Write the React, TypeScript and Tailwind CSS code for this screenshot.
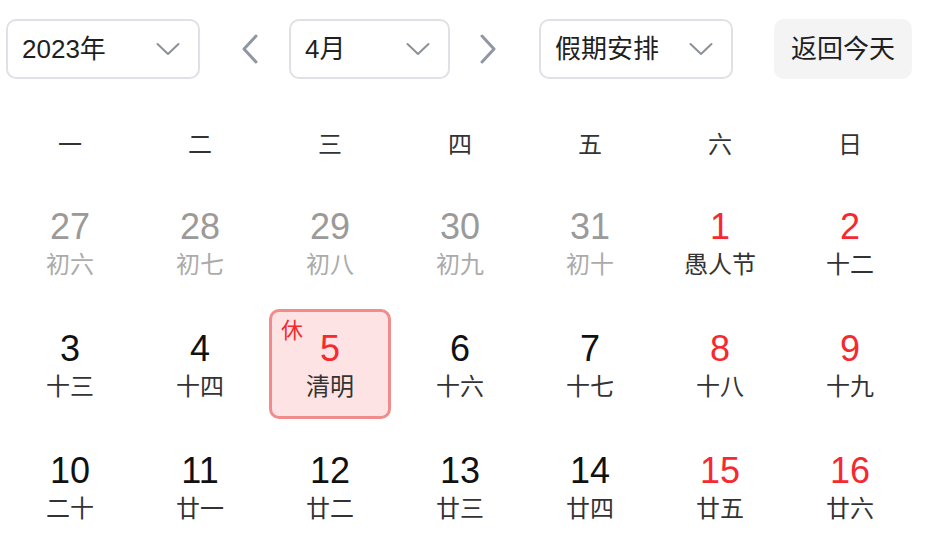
import React from "react";

type Day = {
  num: number;
  lunar: string;
  muted?: boolean;
  red?: boolean;
  rest?: boolean;
};

const WEEKDAYS = ["一", "二", "三", "四", "五", "六", "日"];

const DAYS: Day[] = [
  { num: 27, lunar: "初六", muted: true },
  { num: 28, lunar: "初七", muted: true },
  { num: 29, lunar: "初八", muted: true },
  { num: 30, lunar: "初九", muted: true },
  { num: 31, lunar: "初十", muted: true },
  { num: 1, lunar: "愚人节", red: true },
  { num: 2, lunar: "十二", red: true },
  { num: 3, lunar: "十三" },
  { num: 4, lunar: "十四" },
  { num: 5, lunar: "清明", red: true, rest: true },
  { num: 6, lunar: "十六" },
  { num: 7, lunar: "十七" },
  { num: 8, lunar: "十八", red: true },
  { num: 9, lunar: "十九", red: true },
  { num: 10, lunar: "二十" },
  { num: 11, lunar: "廿一" },
  { num: 12, lunar: "廿二" },
  { num: 13, lunar: "廿三" },
  { num: 14, lunar: "廿四" },
  { num: 15, lunar: "廿五", red: true },
  { num: 16, lunar: "廿六", red: true },
];

function ChevronDown() {
  return (
    <svg width="24" height="14" viewBox="0 0 24 14" fill="none">
      <path d="M1.5 2L12 12L22.5 2" stroke="#8c909a" strokeWidth="2" strokeLinecap="round" strokeLinejoin="round" />
    </svg>
  );
}

function Arrow({ dir }: { dir: "left" | "right" }) {
  return (
    <svg width="18" height="30" viewBox="0 0 18 30" fill="none">
      <path
        d={dir === "left" ? "M15 2L3 15L15 28" : "M3 2L15 15L3 28"}
        stroke="#9096a3"
        strokeWidth="3"
        strokeLinecap="round"
        strokeLinejoin="round"
      />
    </svg>
  );
}

function Select({ label, width }: { label: string; width: string }) {
  return (
    <div
      className={`${width} h-[60px] flex items-center justify-between pl-[14px] pr-[18px] border-2 border-[#dfe1e6] rounded-[10px] bg-white`}
    >
      <span className="text-[26px] leading-none text-[#1f1f1f]">{label}</span>
      <ChevronDown />
    </div>
  );
}

function DayCell({ day }: { day: Day }) {
  const numColor = day.muted ? "text-[#9a9a9a]" : day.red ? "text-[#f5292f]" : "text-[#111111]";
  const lunarColor = day.muted ? "text-[#ababab]" : "text-[#333333]";
  return (
    <div
      className={
        day.rest
          ? "relative h-[110px] -mx-[1px] flex flex-col items-center pt-[17px] rounded-[10px] border-[3px] border-[#f28c8c] bg-[#fde3e3]"
          : "relative h-[110px] flex flex-col items-center pt-[20px]"
      }
    >
      {day.rest && (
        <span className="absolute top-[8px] left-[9px] text-[22px] leading-[22px] text-[#f5292f]">休</span>
      )}
      <span className={`text-[36px] leading-[40px] ${numColor}`}>{day.num}</span>
      <span className={`mt-[3px] text-[24px] leading-[30px] ${lunarColor}`}>{day.lunar}</span>
    </div>
  );
}

export default function App() {
  return (
    <div
      className="w-[938px] h-[548px] bg-white overflow-hidden"
      style={{ fontFamily: '"Liberation Sans", "Noto Sans CJK SC", sans-serif' }}
    >
      <div className="flex items-center pt-[19px]">
        <div className="ml-[6px]">
          <Select label="2023年" width="w-[194px]" />
        </div>
        <button className="ml-[30px] w-[40px] h-[60px] flex items-center justify-center">
          <Arrow dir="left" />
        </button>
        <div className="ml-[19px]">
          <Select label="4月" width="w-[161px]" />
        </div>
        <button className="ml-[18px] w-[40px] h-[60px] flex items-center justify-center">
          <Arrow dir="right" />
        </button>
        <div className="ml-[31px]">
          <Select label="假期安排" width="w-[194px]" />
        </div>
        <button className="ml-[41px] w-[138px] h-[60px] rounded-[10px] bg-[#f4f4f5] text-[26px] leading-none text-[#1f1f1f]">
          返回今天
        </button>
      </div>

      <div className="mt-[36px] ml-[10px] w-[900px] grid grid-cols-7 gap-x-[10px]">
        {WEEKDAYS.map((w) => (
          <div key={w} className="h-[60px] flex items-center justify-center text-[24px] text-[#333333]">
            {w}
          </div>
        ))}
      </div>

      <div className="mt-[12px] ml-[10px] w-[900px] grid grid-cols-7 gap-x-[10px] gap-y-[12px]">
        {DAYS.map((d) => (
          <DayCell key={`${d.num}-${d.lunar}`} day={d} />
        ))}
      </div>
    </div>
  );
}
